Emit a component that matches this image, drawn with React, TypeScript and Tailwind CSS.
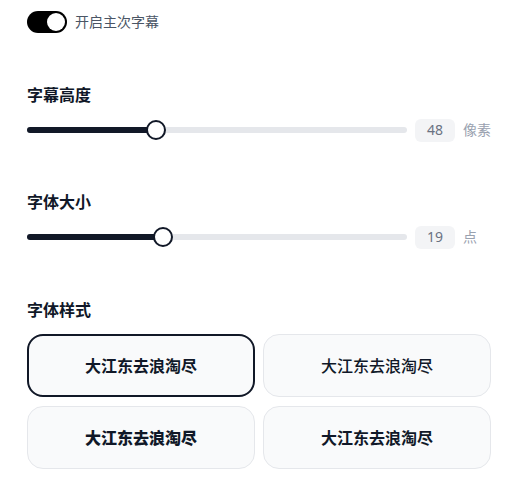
import { useState } from 'react';

const FONT = '"Noto Sans", "Noto Sans CJK SC", sans-serif';

function SliderRow({ pct, value, unit }: { pct: number; value: number; unit: string }) {
  return (
    <div className="flex items-center gap-2">
      <div className="relative h-6 flex-1">
        <div className="absolute inset-x-0 top-1/2 h-1.5 -translate-y-1/2 rounded-full bg-gray-200" />
        <div
          className="absolute left-0 top-1/2 h-1.5 -translate-y-1/2 rounded-full bg-[#111827]"
          style={{ width: `${pct}%` }}
        />
        <div
          className="absolute top-1/2 h-5 w-5 -translate-x-1/2 -translate-y-1/2 rounded-full border-2 border-[#111827] bg-white"
          style={{ left: `${pct}%` }}
        />
      </div>
      <div className="flex h-[23px] w-10 items-center justify-center rounded-md bg-gray-100 text-sm text-gray-500">
        {value}
      </div>
      <span className="w-7 text-sm text-gray-400">{unit}</span>
    </div>
  );
}

const styles = ['font-bold', 'font-medium', 'font-black', 'font-semibold'];

export default function App() {
  const [on, setOn] = useState(true);
  const [selected, setSelected] = useState(0);

  return (
    <div className="bg-white pl-[27px] pr-[40px] pt-[11px]" style={{ fontFamily: FONT }}>
      {/* Toggle */}
      <div className="flex items-center gap-2">
        <button
          onClick={() => setOn(!on)}
          className="relative h-[22px] w-10 rounded-full bg-black"
        >
          <span className="absolute right-[2px] top-[2px] h-[18px] w-[18px] rounded-full bg-white" />
        </button>
        <span className="text-sm text-gray-600">开启主次字幕</span>
      </div>

      {/* Subtitle height */}
      <h3 className="mt-[50px] text-base font-bold text-gray-900">字幕高度</h3>
      <div className="mt-[11px]">
        <SliderRow pct={34} value={48} unit="像素" />
      </div>

      {/* Font size */}
      <h3 className="mt-[48px] text-base font-bold text-gray-900">字体大小</h3>
      <div className="mt-[11px]">
        <SliderRow pct={35.8} value={19} unit="点" />
      </div>

      {/* Font style */}
      <h3 className="mt-[49px] text-base font-bold text-gray-900">字体样式</h3>
      <div className="mt-[12px] grid grid-cols-2 gap-x-2 gap-y-[9px]">
        {styles.map((s, i) => (
          <button
            key={i}
            onClick={() => setSelected(i)}
            className={`flex h-[63px] items-center justify-center rounded-2xl bg-gray-50 text-base text-gray-900 ${s} ${
              selected === i ? 'border-2 border-[#111827]' : 'border border-gray-200'
            }`}
          >
            大江东去浪淘尽
          </button>
        ))}
      </div>
      <div className="h-4" />
    </div>
  );
}
